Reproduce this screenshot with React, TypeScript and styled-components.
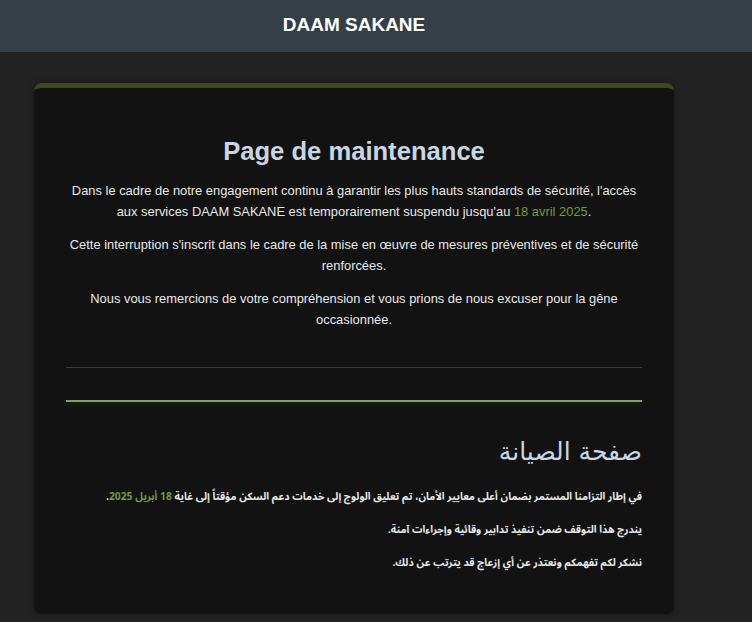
import styled, { createGlobalStyle } from "styled-components";

const GlobalStyle = createGlobalStyle`
	html, body {
		margin: 0;
		padding: 0;
		background: #222222;
		font-family: "Liberation Sans", Arial, sans-serif;
	}
`;

const Header = styled.header`
	height: 52px;
	background: #343f48;
	display: flex;
	align-items: center;
`;

const Container = styled.div`
	width: 640px;
	margin-left: 34px;
`;

const Brand = styled.h2`
	margin: 0;
	text-align: center;
	color: #ffffff;
	font-size: 19px;
	font-weight: 700;
	line-height: 1;
	padding-bottom: 4px;
`;

const Main = styled.main`
	padding: 31px 0 9px;
`;

const Card = styled.section`
	background: #121212;
	border-top: 5px solid #3a4a1c;
	border-radius: 8px;
	padding: 20px 32px 29px;
	box-shadow: 0 0 6px rgba(0, 0, 0, 0.35);
`;

const Block = styled.div<{ $rtl?: boolean }>`
	direction: ${({ $rtl }) => ($rtl ? "rtl" : "ltr")};
	text-align: ${({ $rtl }) => ($rtl ? "right" : "center")};
`;

const Title = styled.h1`
	margin: 29px 0 14px;
	color: #c9d6e3;
	font-size: 25.6px;
	font-weight: 700;
	line-height: 29px;
`;

const ArTitle = styled.h1`
	margin: 0 0 19px;
	color: #c9d6e3;
	font-family: "DejaVu Sans", sans-serif;
	font-size: 25px;
	font-weight: 400;
	line-height: 30px;
`;

const Text = styled.p`
	margin: 12px 0;
	color: #e8e8e8;
	font-size: 12.9px;
	line-height: 21px;
`;

const ArText = styled.p`
	margin: 11px 0;
	color: #e8e8e8;
	font-family: "Noto Sans Arabic", "DejaVu Sans", sans-serif;
	font-size: 10.3px;
	font-weight: 700;
	font-stretch: condensed;
	line-height: 22px;
`;

const Highlight = styled.span<{ $bold?: boolean }>`
	color: #76993a;
	font-weight: ${({ $bold }) => ($bold ? 700 : 400)};
`;

const Divider = styled.hr`
	border: 0;
	height: 1px;
	background: #3a3a3a;
	margin: 37px 0 32px;
`;

const GreenDivider = styled.hr`
	border: 0;
	height: 2px;
	background: #8c9d66;
	box-shadow: 0 2px 4px rgba(40, 60, 10, 0.7);
	margin: 0 0 35px;
`;

const App = () => {
	return (
		<>
			<GlobalStyle />
			<Header>
				<Container>
					<Brand>DAAM SAKANE</Brand>
				</Container>
			</Header>
			<Main>
				<Container>
					<Card>
						<Block>
							<Title>Page de maintenance</Title>
							<Text>
								Dans le cadre de notre engagement continu à garantir les plus hauts standards de sécurité, l'accès aux services DAAM SAKANE est temporairement suspendu jusqu'au <Highlight>18 avril 2025</Highlight>.
							</Text>
							<Text>
								Cette interruption s'inscrit dans le cadre de la mise en œuvre de mesures préventives et de sécurité renforcées.
							</Text>
							<Text>
								Nous vous remercions de votre compréhension et vous prions de nous excuser pour la gêne occasionnée.
							</Text>
						</Block>
						<Divider />
						<GreenDivider />
						<Block $rtl>
							<ArTitle>صفحة الصيانة</ArTitle>
							<ArText>
								في إطار التزامنا المستمر بضمان أعلى معايير الأمان، تم تعليق الولوج إلى خدمات دعم السكن مؤقتاً إلى غاية <Highlight $bold>18 أبريل 2025</Highlight>.
							</ArText>
							<ArText>يندرج هذا التوقف ضمن تنفيذ تدابير وقائية وإجراءات آمنة.</ArText>
							<ArText>نشكر لكم تفهمكم ونعتذر عن أي إزعاج قد يترتب عن ذلك.</ArText>
						</Block>
					</Card>
				</Container>
			</Main>
		</>
	);
};

export default App;
